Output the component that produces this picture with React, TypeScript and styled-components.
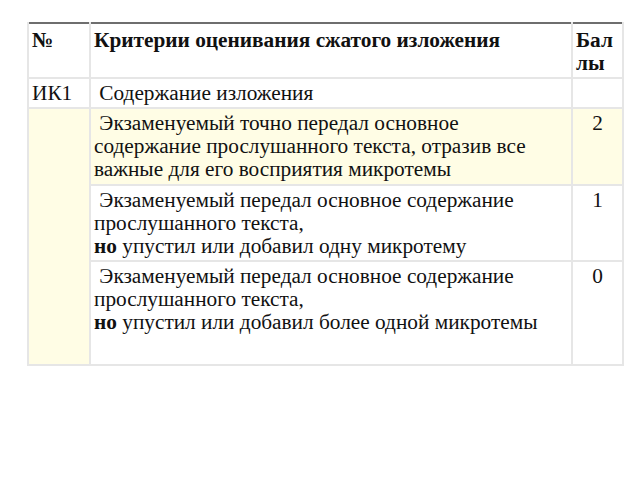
import React from "react";
import styled, { createGlobalStyle } from "styled-components";

const Global = createGlobalStyle`
  html, body { margin: 0; padding: 0; background: #ffffff; }
  body { font-family: "Liberation Serif", "Times New Roman", serif; color: #111111; }
`;

const Page = styled.div`
  padding: 22px 0 0 27px;
`;

const Table = styled.table`
  border-collapse: collapse;
  table-layout: fixed;
  width: 595px;
  font-size: 21.3px;
  line-height: 23px;
  border-top: 2px solid #6e6e6e;
`;

const Col = styled.col<{ $w: number }>`
  width: ${(p) => p.$w}px;
`;

const Cell = styled.td<{ $bold?: boolean; $center?: boolean; $yellow?: boolean; $h?: number }>`
  border: 2px solid #e6e6e6;
  padding: 3px 3px 2px 3px;
  vertical-align: top;
  font-weight: ${(p) => (p.$bold ? 700 : 400)};
  text-align: ${(p) => (p.$center ? "center" : "left")};
  background: ${(p) => (p.$yellow ? "#fffde5" : "transparent")};
  height: ${(p) => (p.$h ? `${p.$h}px` : "auto")};
  box-sizing: border-box;
  word-break: break-word;
  white-space: nowrap;
`;

const HeadCell = styled(Cell)`
  padding-top: 5px;
  border-top: none;
  white-space: normal;
`;

const Row = styled.tr<{ $yellow?: boolean }>`
  background: ${(p) => (p.$yellow ? "#fffde5" : "transparent")};
`;

export default function App() {
  return (
    <>
      <Global />
      <Page>
        <Table>
          <colgroup>
            <Col $w={62} />
            <Col $w={482} />
            <Col $w={51} />
          </colgroup>
          <tbody>
            <tr>
              <HeadCell $bold $h={52}>№</HeadCell>
              <HeadCell $bold>Критерии оценивания сжатого изложения</HeadCell>
              <HeadCell $bold>Баллы</HeadCell>
            </tr>
            <tr>
              <Cell $h={28}>ИК1</Cell>
              <Cell>{"\u00a0"}Содержание изложения</Cell>
              <Cell $center></Cell>
            </tr>
            <Row $yellow>
              <Cell $yellow rowSpan={3}></Cell>
              <Cell $h={77}>
                {"\u00a0"}Экзаменуемый точно передал основное
                <br />
                содержание прослушанного текста, отразив все
                <br />
                важные для его восприятия микротемы
              </Cell>
              <Cell $center>2</Cell>
            </Row>
            <tr>
              <Cell $h={76}>
                {"\u00a0"}Экзаменуемый передал основное содержание
                <br />
                прослушанного текста,
                <br />
                <b>но</b> упустил или добавил одну микротему
              </Cell>
              <Cell $center>1</Cell>
            </tr>
            <tr>
              <Cell $h={104}>
                {"\u00a0"}Экзаменуемый передал основное содержание
                <br />
                прослушанного текста,
                <br />
                <b>но</b> упустил или добавил более одной микротемы
              </Cell>
              <Cell $center>0</Cell>
            </tr>
          </tbody>
        </Table>
      </Page>
    </>
  );
}
